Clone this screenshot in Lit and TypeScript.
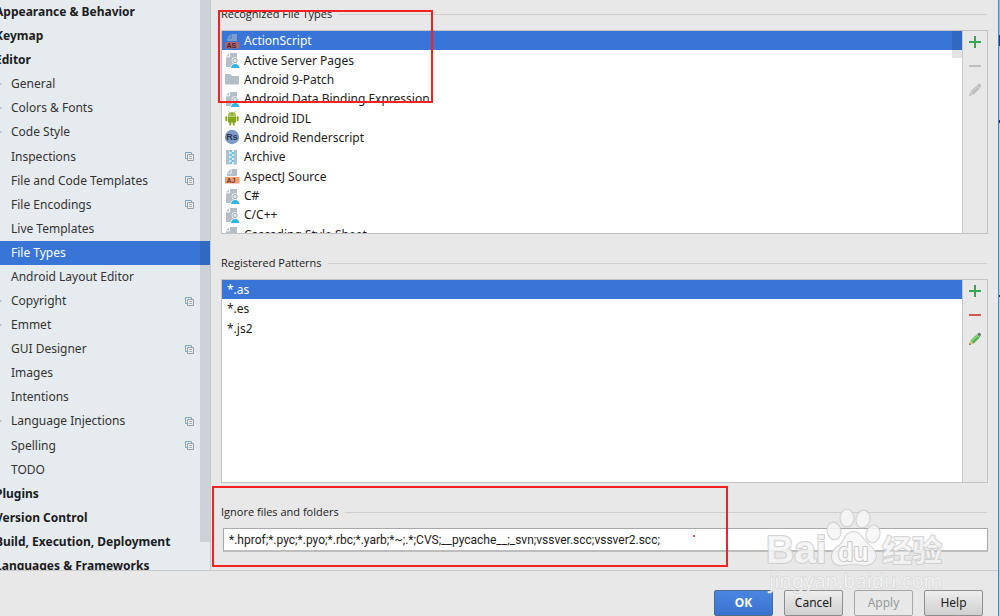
import { LitElement, html, svg, css, nothing } from "lit";
import { customElement, property, state } from "lit/decorators.js";
import { classMap } from "lit/directives/class-map.js";

interface TreeItem {
  label: string;
  level: 0 | 1;
  arrow?: boolean;
  shared?: boolean;
}

const TREE: TreeItem[] = [
  { label: "Appearance & Behavior", level: 0 },
  { label: "Keymap", level: 0 },
  { label: "Editor", level: 0 },
  { label: "General", level: 1, arrow: true },
  { label: "Colors & Fonts", level: 1, arrow: true },
  { label: "Code Style", level: 1, arrow: true },
  { label: "Inspections", level: 1, shared: true },
  { label: "File and Code Templates", level: 1, shared: true },
  { label: "File Encodings", level: 1, shared: true },
  { label: "Live Templates", level: 1 },
  { label: "File Types", level: 1 },
  { label: "Android Layout Editor", level: 1 },
  { label: "Copyright", level: 1, arrow: true, shared: true },
  { label: "Emmet", level: 1, arrow: true },
  { label: "GUI Designer", level: 1, shared: true },
  { label: "Images", level: 1 },
  { label: "Intentions", level: 1 },
  { label: "Language Injections", level: 1, arrow: true, shared: true },
  { label: "Spelling", level: 1, shared: true },
  { label: "TODO", level: 1 },
  { label: "Plugins", level: 0 },
  { label: "Version Control", level: 0 },
  { label: "Build, Execution, Deployment", level: 0 },
  { label: "Languages & Frameworks", level: 0 },
];

const page = svg`<path d="M5 0h7v14H1V4h4z" fill="#b3bec6"/><path d="M1 3.4L4.3 0v3.4z" fill="#b3bec6"/><path d="M4.6 0v4H1" fill="none" stroke="#fff" stroke-width=".7"/>`;
const user = svg`${page}<circle cx="10" cy="7.500" r="3.300" fill="#fff"/><path d="M5.500 15c.2-3.200 2-4.600 4.700-4.600s4.500 1.400 4.700 4.600z" fill="#fff"/><circle cx="10" cy="7.500" r="2.200" fill="#dfe4e7" stroke="#9faab2"/><path d="M6 15c.3-2.900 1.900-4 4.200-4s3.900 1.100 4.200 4z" fill="#32b4e2"/>`;
const badge = (text: string, fill: string, sheet: string, ink: string) => svg`
  <path d="M6.500 0H12v7H2V4.500h4.500z" fill=${sheet}/><path d="M2 3.700L5.700 0v3.700z" fill=${sheet}/>
  <rect y="8" width="14.500" height="6.500" fill=${fill}/>
  <text x="1.500" y="13.600" font-size="7" font-weight="700" fill=${ink}>${text}</text>`;

const ICONS: Record<string, unknown> = {
  as: badge("AS", "#a8676f", "#7d9cc9", "#4a2230"),
  aj: badge("AJ", "#f49b74", "#b3bec6", "#6b4031"),
  user,
  page,
  folder: svg`<path d="M0 2h5.500l1.500 2h7v8.500H0z" fill="#b3bec6"/>`,
  android: svg`<g fill="#83a81c"><path d="M3 4.800C3 2.500 4.800 1.300 7 1.300s4 1.200 4 3.500z"/><path d="M3 5.400h8v6.100H3z"/><rect x=".3" y="5.300" width="2" height="5" rx="1"/><rect x="11.700" y="5.300" width="2" height="5" rx="1"/><rect x="4.300" y="10.500" width="2" height="4" rx="1"/><rect x="7.700" y="10.500" width="2" height="4" rx="1"/></g><path d="M4.600 2L3.700.4M9.400 2l.9-1.600" stroke="#83a81c" stroke-width=".7"/><circle cx="5.200" cy="3.300" r=".6" fill="#fff"/><circle cx="8.800" cy="3.300" r=".6" fill="#fff"/>`,
  rs: svg`<circle cx="7" cy="7" r="7.200" fill="#7f99c9"/><text x="7" y="10.300" text-anchor="middle" font-size="9" font-weight="700" fill="#2b3446">Rs</text>`,
  archive: svg`<path d="M1 0h3.500v14.500H1zM9 0h3v14.500H9z" fill="#b3bec6"/><path d="M4.500 0H9v14.500H4.500z" fill="#d3effa"/><path d="M4.500 1h2.500M6.500 3H9M4.500 5h2.500M6.500 7H9M4.500 9h2.500M6.500 11H9M4.500 13h2.500" stroke="#3fb9e6" stroke-width="1.300"/>`,
};

const FILE_TYPES: [string, string][] = [
  ["as", "ActionScript"],
  ["user", "Active Server Pages"],
  ["folder", "Android 9-Patch"],
  ["user", "Android Data Binding Expression"],
  ["android", "Android IDL"],
  ["rs", "Android Renderscript"],
  ["archive", "Archive"],
  ["aj", "AspectJ Source"],
  ["user", "C#"],
  ["user", "C/C++"],
  ["page", "Cascading Style Sheet"],
];

const PATTERNS = ["*.as", "*.es", "*.js2"];

@customElement("settings-tree")
class SettingsTree extends LitElement {
  @state() private selected = "File Types";

  static styles = css`
    :host { display: block; position: relative; overflow: hidden; background: #e6ebf0; border-right: 1px solid #c8cacc; }
    .items { list-style: none; margin: 0; padding: 0; display: grid; grid-auto-rows: 1fr; height: 578px; }
    .item { display: grid; }
    .link { display: flex; align-items: center; padding: 0 16px 0 11px; color: #333; text-decoration: none; white-space: nowrap; position: relative; }
    .group { padding-left: 0; margin-left: -5px; font-weight: 700; color: #1c1c1c; }
    .active { background: #3875d7; color: #fff; }
    .label { flex: 1; }
    .shared { width: 9px; height: 9px; }
    .arrow { position: absolute; left: -3px; top: 10px; width: 5px; height: 4px; }
    .thumb { position: absolute; top: 0; right: 0; width: 10px; height: 95%; background: rgba(0, 10, 20, 0.11); }
  `;

  render() {
    return html`
      <ul class="items">
        ${TREE.map(
          (t) => html`<li class="item">
            <a href="#" class=${classMap({ link: true, group: t.level === 0, active: t.label === this.selected })}
              @click=${(e: Event) => { e.preventDefault(); this.selected = t.label; }}>
              ${t.arrow ? html`<svg class="arrow" viewBox="0 0 5 4"><path d="M0 0l5 2-5 2z" fill="#9a9fa4"/></svg>` : nothing}
              <span class="label">${t.label}</span>
              ${t.shared ? html`<svg class="shared" viewBox="0 0 9 9" fill="none"><path d="M2.500 6.500h-2v-6h6v2" stroke="#7ba7c7"/><path d="M2.500 2.500h6v6h-6z" fill="#eceff1" stroke="#9c9fa2"/><path d="M4 4.500h3M4 6.500h3" stroke="#aaa"/></svg>` : nothing}
            </a>
          </li>`
        )}
      </ul>
      <div class="thumb"></div>
    `;
  }
}

@customElement("list-panel")
class ListPanel extends LitElement {
  @property() heading = "";
  @property({ type: Boolean }) locked = false;
  @property({ type: Boolean }) scrolls = false;

  static styles = css`
    :host { display: flex; flex-direction: column; min-height: 0; }
    .heading { display: flex; align-items: center; gap: 6px; margin: 0 1px 7px 0; font: 400 11px/18px "Open Sans", "Noto Sans", sans-serif; color: #222; }
    .heading::after { content: ""; flex: 1; height: 1px; background: #d0d0d0; }
    .frame { flex: 1; min-height: 0; display: flex; border: 1px solid #c3c3c3; box-sizing: border-box; }
    .view { flex: 1; position: relative; overflow: hidden; background: #fff; }
    .tools { width: 25px; display: flex; flex-direction: column; align-items: center; gap: 10px; padding-top: 4px; border-left: 1px solid #c9c9c9; background: #e8e8e8; box-sizing: border-box; }
    .tool { width: 14px; height: 14px; padding: 0; border: 0; background: none; display: block; }
    .glyph { display: block; width: 14px; height: 14px; }
    .thumb { position: absolute; top: 0; right: 0; width: 10px; height: 27px; background: rgba(0, 10, 20, 0.11); }
  `;

  render() {
    const minus = this.locked ? "#bdbdbd" : "#cf5b4f";
    return html`
      <h2 class="heading">${this.heading}</h2>
      <div class="frame">
        <div class="view"><slot></slot>${this.scrolls ? html`<div class="thumb"></div>` : nothing}</div>
        <div class="tools">
          <button class="tool" aria-label="Add"><svg class="glyph" viewBox="0 0 14 14"><path d="M7 1v12M1 7h12" stroke="#36a64f" stroke-width="2"/></svg></button>
          <button class="tool" aria-label="Remove" ?disabled=${this.locked}><svg class="glyph" viewBox="0 0 14 14"><path d="M1 7h12" stroke=${minus} stroke-width="2"/></svg></button>
          <button class="tool" aria-label="Edit" ?disabled=${this.locked}>
            <svg class="glyph" viewBox="0 0 14 14">
              <path d="M1 13l1.200-4L5 11.800z" fill=${this.locked ? "#c4c4c4" : "#e8b36c"}/>
              <path d="M1 13l.5-1.800 1.300 1.300z" fill=${this.locked ? "#b8b8b8" : "#444"}/>
              <path d="M2.500 8.500l6-5.800 3 3-6 6z" fill=${this.locked ? "#bcbcbc" : "#4fb552"}/>
              <path d="M3.600 9.300l5.900-5.700" stroke=${this.locked ? "#c8c8c8" : "#8fdb8c"} stroke-width="1.200"/>
              <path d="M9 2.300L10.500 1q1.300-.5 2 .4t.2 2L11.800 5.200z" fill=${this.locked ? "#bcbcbc" : "#6b7a6b"}/>
            </svg>
          </button>
        </div>
      </div>
    `;
  }
}

@customElement("app-root")
class AppRoot extends LitElement {
  static styles = css`
    :host { display: flex; height: 100vh; overflow: hidden; position: relative; background: #e8e8e8; font: 12px/18px "Noto Sans", "Open Sans", sans-serif; color: #222; }
    .dialog { flex: 1; min-width: 0; display: flex; flex-direction: column; }
    .main { flex: 1; min-height: 0; display: flex; border-bottom: 1px solid #cacaca; }
    .tree { width: 210px; }
    .content { flex: 1; min-width: 0; display: flex; flex-direction: column; gap: 20px; padding: 5px 10px 18px; }
    .panel { flex: 1; }
    .rows { list-style: none; margin: 0; padding: 0; display: grid; grid-auto-rows: 1fr; }
    .types { height: 213px; }
    .patterns { height: 58px; }
    .row { display: flex; align-items: center; gap: 5px; padding: 1px 3px 0; color: #1c1c1c; white-space: nowrap; }
    .patterns .row { padding: 1px 5px 0; }
    .on, .patterns .on { background: #3875d7; color: #fff; }
    .icon { width: 14px; height: 15px; overflow: visible; font-family: "Liberation Sans", sans-serif; }
    .ignore { display: flex; flex-direction: column; }
    .caption { display: flex; align-items: center; gap: 6px; margin-right: 1px; font: 11px/18px "Open Sans", "Noto Sans", sans-serif; }
    .caption::after { content: ""; flex: 1; height: 1px; background: #d0d0d0; }
    .field { margin: 7px 0 0 2px; height: 24px; box-sizing: border-box; border: 1px solid #a9a9a9; border-bottom: 2px solid #bdbdbd; padding: 0 5px; background: #fff; font: 12px/18px Roboto, "Noto Sans", sans-serif; color: #1c1c1c; outline: 0; }
    .footer { display: flex; justify-content: flex-end; gap: 11px; padding: 19px 15px 0; }
    .button { width: 59px; height: 26px; box-sizing: border-box; padding: 0; border: 1px solid #8e8e8e; border-radius: 2px; background: linear-gradient(#eeeeee, #cfcfcf); font: inherit; color: #1c1c1c; }
    .primary { border-color: #52698f; background: linear-gradient(#4a85e2, #3b74d0); color: #fff; font-weight: 700; }
    .button:disabled { border-color: #a8a8a8; background: #e8e8e8; color: #999; }
    .edge { width: 2px; box-sizing: border-box; border-left: 1px solid #2f8fe0; background: linear-gradient(#8fbfe8 0 35px, #1a3f80 35px 46px, #a9cdec 46px 120px, #10284f 120px 123px, #b5d4ee 123px 295px, #333 295px 297px, #b5d4ee 297px); }
    .mark { position: absolute; border: 2px solid #f52222; pointer-events: none; box-sizing: border-box; }
    .mark-types { left: 218px; top: 10px; width: 215px; height: 93px; }
    .mark-ignore { left: 212px; top: 486px; width: 516px; height: 81px; }
    .speck { position: absolute; left: 693px; top: 535px; width: 2px; height: 2px; background: #f05050; }
    .watermark { position: absolute; right: 50px; bottom: 10px; width: 186px; height: 100px; pointer-events: none; }
  `;

  @state() private ignored = "*.hprof;*.pyc;*.pyo;*.rbc;*.yarb;*~;.*;CVS;__pycache__;_svn;vssver.scc;vssver2.scc;";

  render() {
    return html`
      <div class="dialog">
        <div class="main">
          <settings-tree class="tree"></settings-tree>
          <div class="content">
            <list-panel class="panel" heading="Recognized File Types" locked scrolls>
              <ul class="rows types" role="listbox" aria-label="Recognized File Types">
                ${FILE_TYPES.map(([icon, label], i) => html`
                  <li class=${classMap({ row: true, on: i === 0 })} role="option" aria-selected=${i === 0}>
                    <svg class="icon" viewBox="0 0 14 15">${ICONS[icon]}</svg><span>${label}</span>
                  </li>`)}
              </ul>
            </list-panel>
            <list-panel class="panel" heading="Registered Patterns">
              <ul class="rows patterns" role="listbox" aria-label="Registered Patterns">
                ${PATTERNS.map((p, i) => html`<li class=${classMap({ row: true, on: i === 0 })} role="option" aria-selected=${i === 0}>${p}</li>`)}
              </ul>
            </list-panel>
            <div class="ignore">
              <label class="caption" for="ignored">Ignore files and folders</label>
              <input class="field" id="ignored" type="text" spellcheck="false" .value=${this.ignored}
                @input=${(e: Event) => { this.ignored = (e.target as HTMLInputElement).value; }} />
            </div>
          </div>
        </div>
        <div class="footer">
          <button class="button primary">OK</button>
          <button class="button">Cancel</button>
          <button class="button" disabled>Apply</button>
          <button class="button">Help</button>
        </div>
      </div>
      <div class="edge"></div>
      <div class="mark mark-types"></div>
      <div class="mark mark-ignore"></div>
      <div class="speck"></div>
      <svg class="watermark" viewBox="0 0 186 100" fill="#f6f6f6" fill-opacity=".85" stroke="#c8c8c8" stroke-opacity=".8" stroke-width="2" stroke-linejoin="round" paint-order="stroke" font-family="Liberation Sans, Noto Sans CJK SC, sans-serif">
        <text x="2" y="57" font-size="39" font-weight="700">Bai</text>
        <ellipse cx="83" cy="12" rx="6.500" ry="8.500"/>
        <ellipse cx="99" cy="13" rx="6.500" ry="8.500" transform="rotate(12 99 13)"/>
        <ellipse cx="70" cy="25" rx="6.500" ry="8.500" transform="rotate(-12 70 25)"/>
        <ellipse cx="109" cy="28" rx="6.500" ry="8.500" transform="rotate(15 109 28)"/>
        <path d="M89 26c8 0 10 8 16 13s8 9 6 14-8 7-13 6-13-1-18 0-12-1-12-8 3-8 8-12 5-13 13-13z"/>
        <text x="74" y="55" font-size="25" font-weight="700" fill="#fff" stroke="#bdbdbd">du</text>
        <text x="118" y="55" font-size="30" font-weight="700" font-family="Noto Sans CJK SC, sans-serif">经验</text>
        <text x="5" y="82" font-size="20" stroke-width="1" font-family="Noto Sans, sans-serif">jingyan.baidu.com</text>
      </svg>
    `;
  }
}
